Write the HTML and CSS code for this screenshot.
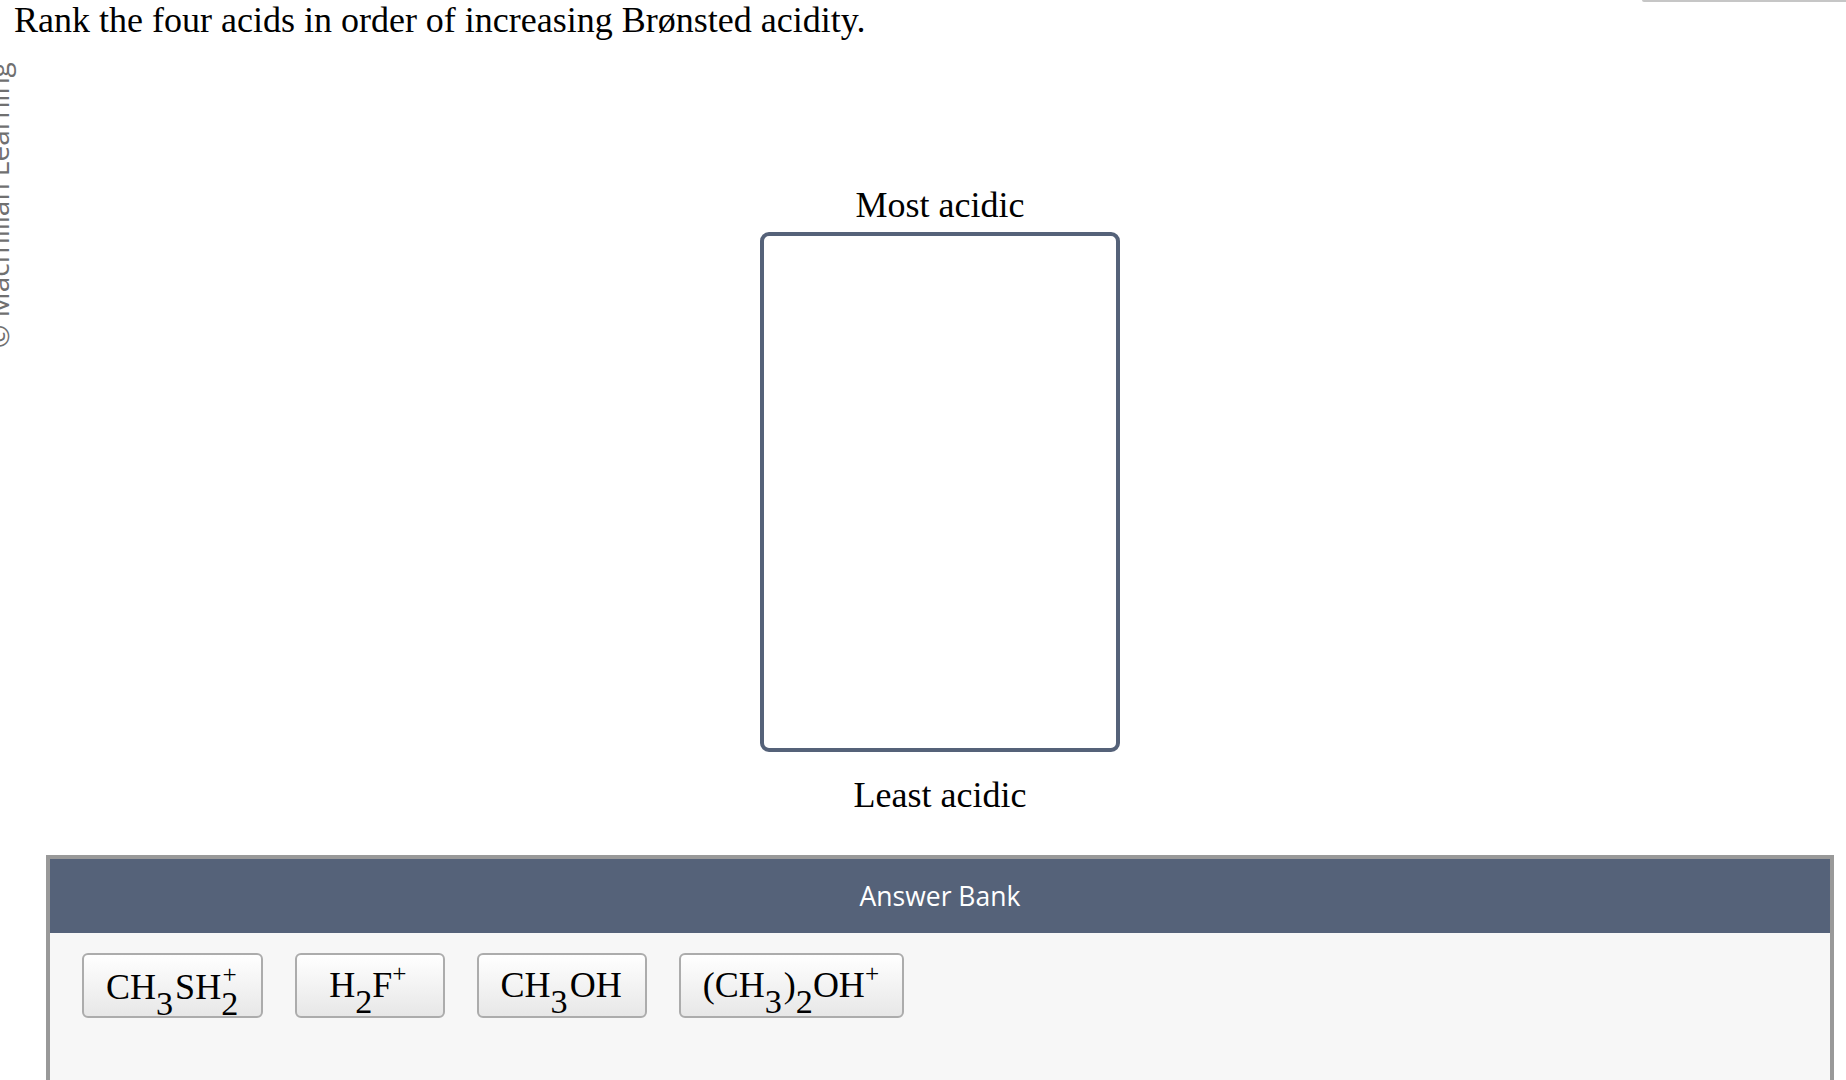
FILE: index.html
```html
<!DOCTYPE html>
<html lang="en">
<head>
<meta charset="utf-8">
<title>Rank acids</title>
<link rel="stylesheet" href="styles.css">
</head>
<body>
<div class="watermark">© Macmillan Learning</div>
<div class="top-tab"></div>
<h1 class="question">Rank the four acids in order of increasing Brønsted acidity.</h1>
<main class="content">
  <section class="ranking">
    <div class="rank-label">Most acidic</div>
    <div class="rank-box"></div>
    <div class="rank-label">Least acidic</div>
  </section>
  <section class="bank">
    <div class="bank-head">Answer Bank</div>
    <div class="bank-body">
      <div class="chips">
        <div class="chip">CH<span class="sub">3</span>SH<span class="supsub"><span class="ss-sup">+</span><span class="ss-sub">2</span></span></div>
        <div class="chip chip-wide">H<span class="sub tight">2</span>F<span class="sup">+</span></div>
        <div class="chip">CH<span class="sub">3</span>OH</div>
        <div class="chip">(CH<span class="sub">3</span>)<span class="sub tight">2</span>OH<span class="sup">+</span></div>
      </div>
    </div>
  </section>
</main>
</body>
</html>
```
FILE: styles.css
```css
html, body {
  margin: 0;
  padding: 0;
  background: #ffffff;
}

body {
  font-family: "Liberation Serif", "Times New Roman", serif;
  color: #000;
  position: relative;
  overflow-x: hidden;
}

.watermark {
  position: absolute;
  left: -15px;
  top: 348px;
  transform-origin: 0 0;
  transform: rotate(-90deg);
  font-family: "Open Sans", "Liberation Sans", sans-serif;
  font-size: 28px;
  line-height: 27px;
  color: #707070;
  white-space: nowrap;
}

.top-tab {
  position: absolute;
  top: 0;
  right: 0;
  width: 204px;
  height: 2px;
  background: #c6c6c6;
  border-bottom-left-radius: 3px;
}

.question {
  margin: 0;
  padding-left: 14px;
  font-size: 36px;
  font-weight: normal;
  line-height: 41px;
}

.content {
  margin: 0 12px 0 46px;
}

.ranking {
  display: flex;
  flex-direction: column;
  align-items: center;
  padding-top: 144px;
}

.rank-label {
  font-size: 36px;
  line-height: 41px;
}

.rank-box {
  box-sizing: border-box;
  width: 360px;
  height: 520px;
  border: 4px solid #556279;
  border-radius: 9px;
  margin: 6px 0 23px;
}

.bank {
  margin-top: 39px;
  border: 4px solid #999999;
  border-bottom: none;
}

.bank-head {
  height: 74px;
  background: #556279;
  color: #ffffff;
  display: flex;
  align-items: center;
  justify-content: center;
  font-family: "Open Sans", "Liberation Sans", sans-serif;
  font-size: 26.5px;
}

.bank-body {
  background: #f7f7f7;
  padding: 20px 32px;
  height: 220px;
}

.chips {
  display: flex;
  gap: 32px;
}

.chip {
  box-sizing: border-box;
  height: 65px;
  padding: 10px 23px 0 22px;
  border: 2px solid #acacac;
  border-radius: 6px;
  background: linear-gradient(#ffffff, #e7e7e7);
  font-size: 36px;
  line-height: 41px;
  white-space: nowrap;
}

.chip-wide {
  padding-left: 32px;
  padding-right: 36px;
}

.sub {
  font-size: 0.95em;
  line-height: 0;
  vertical-align: -16px;
  margin-right: 2px;
}

.sub.tight {
  margin-right: 0;
}

.sup {
  font-size: 0.7em;
  line-height: 0;
  vertical-align: 15px;
}

.supsub {
  display: inline-flex;
  flex-direction: column;
  align-items: center;
  vertical-align: 15.7px;
  line-height: 20px;
  gap: 8.7px;
}

.ss-sup {
  font-size: 25.2px;
}

.ss-sub {
  font-size: 34.2px;
}
```
